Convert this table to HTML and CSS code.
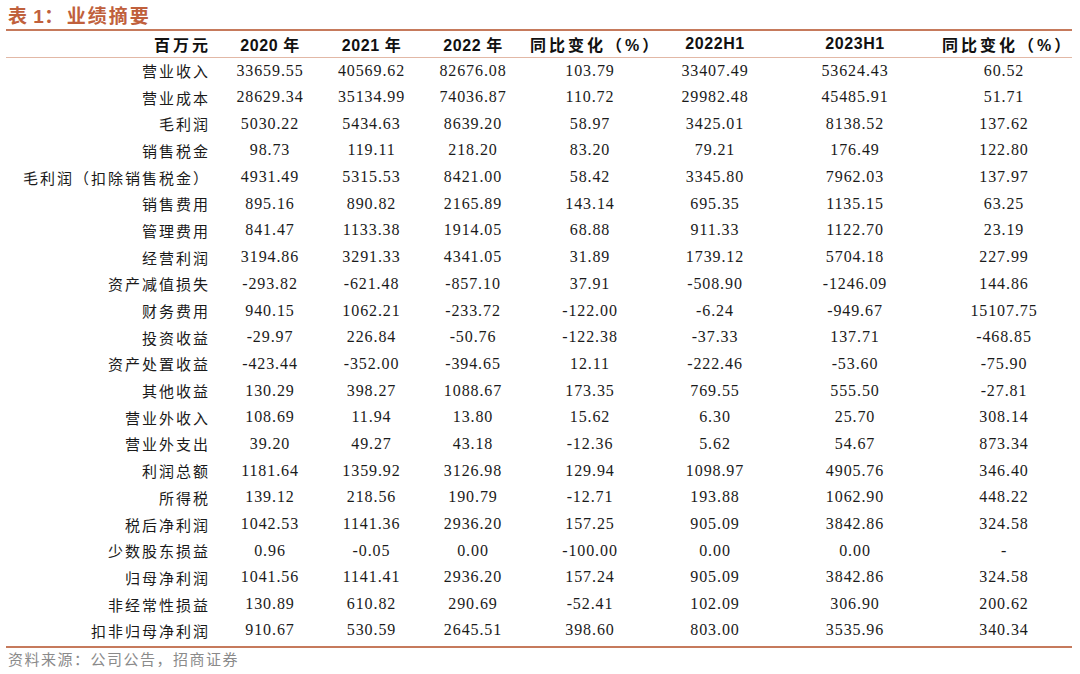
FILE: index.html
```html
<!DOCTYPE html>
<html lang="zh-CN">
<head>
<meta charset="utf-8">
<title>业绩摘要</title>
<link rel="stylesheet" href="styles.css">
</head>
<body>
<div class="page">
  <h1 class="title"><span class="num">表 1：</span>业绩摘要</h1>
  <table class="tbl">
    <colgroup>
      <col class="c-label"><col class="c-a"><col class="c-b"><col class="c-c"><col class="c-d"><col class="c-e"><col class="c-f"><col class="c-g">
    </colgroup>
    <thead>
      <tr>
        <th class="label">百万元</th>
        <th>2020 年</th>
        <th>2021 年</th>
        <th>2022 年</th>
        <th class="cn">同比变化（%）</th>
        <th>2022H1</th>
        <th>2023H1</th>
        <th class="cn">同比变化（%）</th>
      </tr>
    </thead>
    <tbody>
      <tr><td class="label">营业收入</td><td>33659.55</td><td>40569.62</td><td>82676.08</td><td>103.79</td><td>33407.49</td><td>53624.43</td><td>60.52</td></tr>
      <tr><td class="label">营业成本</td><td>28629.34</td><td>35134.99</td><td>74036.87</td><td>110.72</td><td>29982.48</td><td>45485.91</td><td>51.71</td></tr>
      <tr><td class="label">毛利润</td><td>5030.22</td><td>5434.63</td><td>8639.20</td><td>58.97</td><td>3425.01</td><td>8138.52</td><td>137.62</td></tr>
      <tr><td class="label">销售税金</td><td>98.73</td><td>119.11</td><td>218.20</td><td>83.20</td><td>79.21</td><td>176.49</td><td>122.80</td></tr>
      <tr><td class="label">毛利润（扣除销售税金）</td><td>4931.49</td><td>5315.53</td><td>8421.00</td><td>58.42</td><td>3345.80</td><td>7962.03</td><td>137.97</td></tr>
      <tr><td class="label">销售费用</td><td>895.16</td><td>890.82</td><td>2165.89</td><td>143.14</td><td>695.35</td><td>1135.15</td><td>63.25</td></tr>
      <tr><td class="label">管理费用</td><td>841.47</td><td>1133.38</td><td>1914.05</td><td>68.88</td><td>911.33</td><td>1122.70</td><td>23.19</td></tr>
      <tr><td class="label">经营利润</td><td>3194.86</td><td>3291.33</td><td>4341.05</td><td>31.89</td><td>1739.12</td><td>5704.18</td><td>227.99</td></tr>
      <tr><td class="label">资产减值损失</td><td>-293.82</td><td>-621.48</td><td>-857.10</td><td>37.91</td><td>-508.90</td><td>-1246.09</td><td>144.86</td></tr>
      <tr><td class="label">财务费用</td><td>940.15</td><td>1062.21</td><td>-233.72</td><td>-122.00</td><td>-6.24</td><td>-949.67</td><td>15107.75</td></tr>
      <tr><td class="label">投资收益</td><td>-29.97</td><td>226.84</td><td>-50.76</td><td>-122.38</td><td>-37.33</td><td>137.71</td><td>-468.85</td></tr>
      <tr><td class="label">资产处置收益</td><td>-423.44</td><td>-352.00</td><td>-394.65</td><td>12.11</td><td>-222.46</td><td>-53.60</td><td>-75.90</td></tr>
      <tr><td class="label">其他收益</td><td>130.29</td><td>398.27</td><td>1088.67</td><td>173.35</td><td>769.55</td><td>555.50</td><td>-27.81</td></tr>
      <tr><td class="label">营业外收入</td><td>108.69</td><td>11.94</td><td>13.80</td><td>15.62</td><td>6.30</td><td>25.70</td><td>308.14</td></tr>
      <tr><td class="label">营业外支出</td><td>39.20</td><td>49.27</td><td>43.18</td><td>-12.36</td><td>5.62</td><td>54.67</td><td>873.34</td></tr>
      <tr><td class="label">利润总额</td><td>1181.64</td><td>1359.92</td><td>3126.98</td><td>129.94</td><td>1098.97</td><td>4905.76</td><td>346.40</td></tr>
      <tr><td class="label">所得税</td><td>139.12</td><td>218.56</td><td>190.79</td><td>-12.71</td><td>193.88</td><td>1062.90</td><td>448.22</td></tr>
      <tr><td class="label">税后净利润</td><td>1042.53</td><td>1141.36</td><td>2936.20</td><td>157.25</td><td>905.09</td><td>3842.86</td><td>324.58</td></tr>
      <tr><td class="label">少数股东损益</td><td>0.96</td><td>-0.05</td><td>0.00</td><td>-100.00</td><td>0.00</td><td>0.00</td><td>-</td></tr>
      <tr><td class="label">归母净利润</td><td>1041.56</td><td>1141.41</td><td>2936.20</td><td>157.24</td><td>905.09</td><td>3842.86</td><td>324.58</td></tr>
      <tr><td class="label">非经常性损益</td><td>130.89</td><td>610.82</td><td>290.69</td><td>-52.41</td><td>102.09</td><td>306.90</td><td>200.62</td></tr>
      <tr class="last"><td class="label">扣非归母净利润</td><td>910.67</td><td>530.59</td><td>2645.51</td><td>398.60</td><td>803.00</td><td>3535.96</td><td>340.34</td></tr>
    </tbody>
  </table>
  <p class="source">资料来源：公司公告，招商证券</p>
</div>
</body>
</html>
```
FILE: styles.css
```css
* { box-sizing: border-box; }
html, body { margin: 0; padding: 0; background: #ffffff; }
.page {
  width: 1080px;
  height: 674px;
  padding: 0 8px 0 6px;
  overflow: hidden;
}
.title {
  margin: 0;
  height: 31px;
  padding: 3px 0 0 2px;
  font-family: "Noto Sans CJK SC", sans-serif;
  font-size: 19px;
  line-height: 24px;
  font-weight: 700;
  color: #c0603c;
  letter-spacing: 2px;
  border-bottom: 2px solid #c67a5c;
}
.title .num { font-family: "Liberation Sans", "Noto Sans CJK SC", sans-serif; letter-spacing: 0.5px; margin-right: 3px; }
.tbl {
  width: 1066px;
  border-collapse: collapse;
  table-layout: fixed;
}
.c-label { width: 213px; }
.c-a { width: 102px; }
.c-b { width: 101px; }
.c-c { width: 102px; }
.c-d { width: 132px; }
.c-e { width: 118px; }
.c-f { width: 162px; }
.c-g { width: 136px; }
.tbl th {
  height: 26px;
  padding: 0;
  text-align: center;
  font-family: "Liberation Sans", "Noto Sans CJK SC", sans-serif;
  font-size: 16px;
  font-weight: 700;
  color: #111;
  border-bottom: 1px solid #e2b8a6;
  white-space: nowrap;
  letter-spacing: 0.6px;
}
.tbl th.cn { letter-spacing: 3px; padding-left: 6px; }
.tbl th.label { text-align: right; padding-right: 8px; letter-spacing: 3px; }
.tbl td {
  height: 26.7px;
  padding: 0;
  text-align: center;
  font-family: "Liberation Serif", "Noto Sans CJK SC", serif;
  font-size: 16px;
  color: #1a1a1a;
  letter-spacing: 0.9px;
  white-space: nowrap;
}
.tbl td.label {
  text-align: right;
  padding-right: 9px;
  font-size: 15px;
  letter-spacing: 2px;
  font-weight: 400;
}
.tbl tr.last td {
  height: 29.7px;
  padding-bottom: 3px;
  border-bottom: 2px solid #c67a5c;
}
.source {
  margin: 2px 0 0 2px;
  font-family: "Liberation Serif", "Noto Sans CJK SC", serif;
  font-size: 15px;
  color: #8a8a8a;
  letter-spacing: 1.5px;
  line-height: 20px;
}
```
